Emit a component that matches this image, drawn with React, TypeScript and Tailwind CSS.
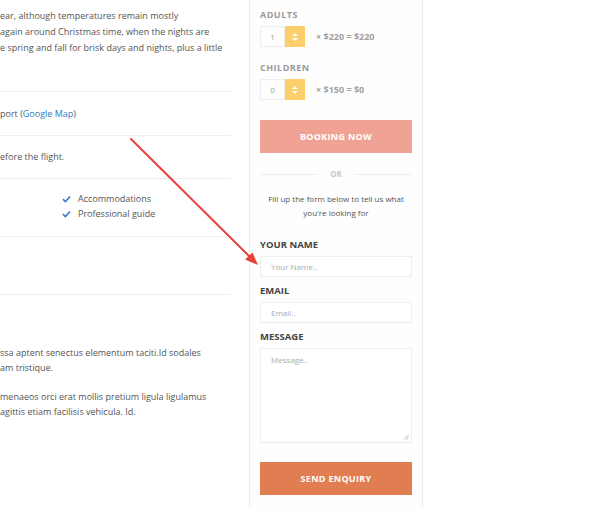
import React from "react";

const font = { fontFamily: '"Open Sans", "Noto Sans", sans-serif' };

function Check() {
  return (
    <svg width="9" height="8" viewBox="0 0 10 8" className="shrink-0">
      <path d="M1 4.2 L3.8 6.8 L9 1.2" fill="none" stroke="#3a78c9" strokeWidth="1.8" />
    </svg>
  );
}

function Spinner() {
  return (
    <div className="w-[20px] h-[21px] bg-[#fdcf6a] flex flex-col items-center justify-center gap-[2px]">
      <svg width="6" height="3" viewBox="0 0 6 3"><path d="M0 3 L3 0 L6 3Z" fill="#fff" /></svg>
      <svg width="6" height="3" viewBox="0 0 6 3"><path d="M0 0 L3 3 L6 0Z" fill="#fff" /></svg>
    </div>
  );
}

function Counter({ value, text }: { value: string; text: string }) {
  return (
    <div className="flex items-center mt-[5px]">
      <div className="w-[25px] h-[21px] border border-[#eeeeee] flex items-center justify-center text-[8px] text-[#999]">
        {value}
      </div>
      <Spinner />
      <div className="ml-[11px] text-[9px] font-bold text-[#a0a0a0]">{text}</div>
    </div>
  );
}

export default function App() {
  return (
    <div className="relative w-[600px] h-[509px] overflow-hidden bg-white flex" style={font}>
      {/* left column */}
      <div className="w-[231px] shrink-0 text-[9px] text-[#555] whitespace-nowrap">
        <div className="pt-[8px] leading-[16px] h-[91px]">
          <div>ear, although temperatures remain mostly</div>
          <div>again around Christmas time, when the nights are</div>
          <div>e spring and fall for brisk days and nights, plus a little</div>
        </div>
        <div className="border-t border-[#eeeeee] h-[44px] flex items-center">
          <div>
            port (<span className="text-[#2f7bbd]">Google Map</span>)
          </div>
        </div>
        <div className="border-t border-[#eeeeee] h-[43px] flex items-center">
          <div>efore the flight.</div>
        </div>
        <div className="border-t border-[#eeeeee] h-[58px] pt-[12px] pl-[62px] leading-[15px]">
          <div className="flex items-center gap-[7px]"><Check /><span>Accommodations</span></div>
          <div className="flex items-center gap-[7px]"><Check /><span>Professional guide</span></div>
        </div>
        <div className="border-t border-[#eeeeee] h-[58px]"></div>
        <div className="border-t border-[#eeeeee] pt-[50px] leading-[15px]">
          <div>ssa aptent senectus elementum taciti.Id sodales</div>
          <div>am tristique.</div>
          <div className="mt-[14px]">menaeos orci erat mollis pretium ligula ligulamus</div>
          <div>agittis etiam facilisis vehicula. Id.</div>
        </div>
      </div>

      {/* sidebar */}
      <div className="ml-[18px] w-[174px] shrink-0 border-l border-r border-[#eeeeee] px-[10px] bg-[#fefefe]">
        <div className="pt-[9px] text-[9px] leading-[12px] font-bold tracking-[0.5px] text-[#9a9a9a]">ADULTS</div>
        <Counter value="1" text="× $220 = $220" />
        <div className="mt-[15px] text-[9px] leading-[12px] font-bold tracking-[0.5px] text-[#9a9a9a]">CHILDREN</div>
        <Counter value="0" text="× $150 = $0" />
        <div className="mt-[20px] h-[33px] bg-[#f0a295] flex items-center justify-center text-white text-[9px] font-bold tracking-[0.3px]">
          BOOKING NOW
        </div>
        <div className="mt-[15px] flex items-center h-[12px]">
          <div className="flex-1 border-t border-[#eeeeee]"></div>
          <div className="px-[12px] text-[8px] font-bold text-[#c8c8c8]">OR</div>
          <div className="flex-1 border-t border-[#eeeeee]"></div>
        </div>
        <div className="mt-[12px] text-center text-[8px] leading-[14px] text-[#555]">
          Fill up the form below to tell us what<br />you're looking for
        </div>
        <div className="mt-[18px] text-[9.5px] leading-[13px] font-bold text-[#444]">YOUR NAME</div>
        <div className="mt-[5px] h-[21px] border border-[#eeeeee] bg-white flex items-center pl-[10px] text-[8px] text-[#aaa]">
          Your Name..
        </div>
        <div className="mt-[7px] text-[9.5px] leading-[13px] font-bold text-[#444]">EMAIL</div>
        <div className="mt-[5px] h-[21px] border border-[#eeeeee] bg-white flex items-center pl-[10px] text-[8px] text-[#aaa]">
          Email..
        </div>
        <div className="mt-[7px] text-[9.5px] leading-[13px] font-bold text-[#444]">MESSAGE</div>
        <div className="relative mt-[5px] h-[95px] border border-[#eeeeee] bg-white pl-[10px] pt-[5px] text-[8px] text-[#aaa]">
          Message..
          <svg className="absolute right-[2px] bottom-[2px]" width="6" height="6" viewBox="0 0 6 6">
            <path d="M5.5 1 L1 5.5 M5.5 3.5 L3.5 5.5" stroke="#999" strokeWidth="0.8" />
          </svg>
        </div>
        <div className="mt-[19px] h-[33px] bg-[#e07e51] flex items-center justify-center text-white text-[9px] font-bold tracking-[0.3px]">
          SEND ENQUIRY
        </div>
      </div>

      {/* red annotation arrow */}
      <svg className="absolute left-0 top-0 pointer-events-none" width="600" height="509">
        <line x1="131" y1="139" x2="252" y2="259" stroke="#e8403a" strokeWidth="2" strokeLinecap="round" />
        <path d="M258 265 L245 259.5 L252.5 252.5 Z" fill="#e8403a" />
      </svg>
    </div>
  );
}
